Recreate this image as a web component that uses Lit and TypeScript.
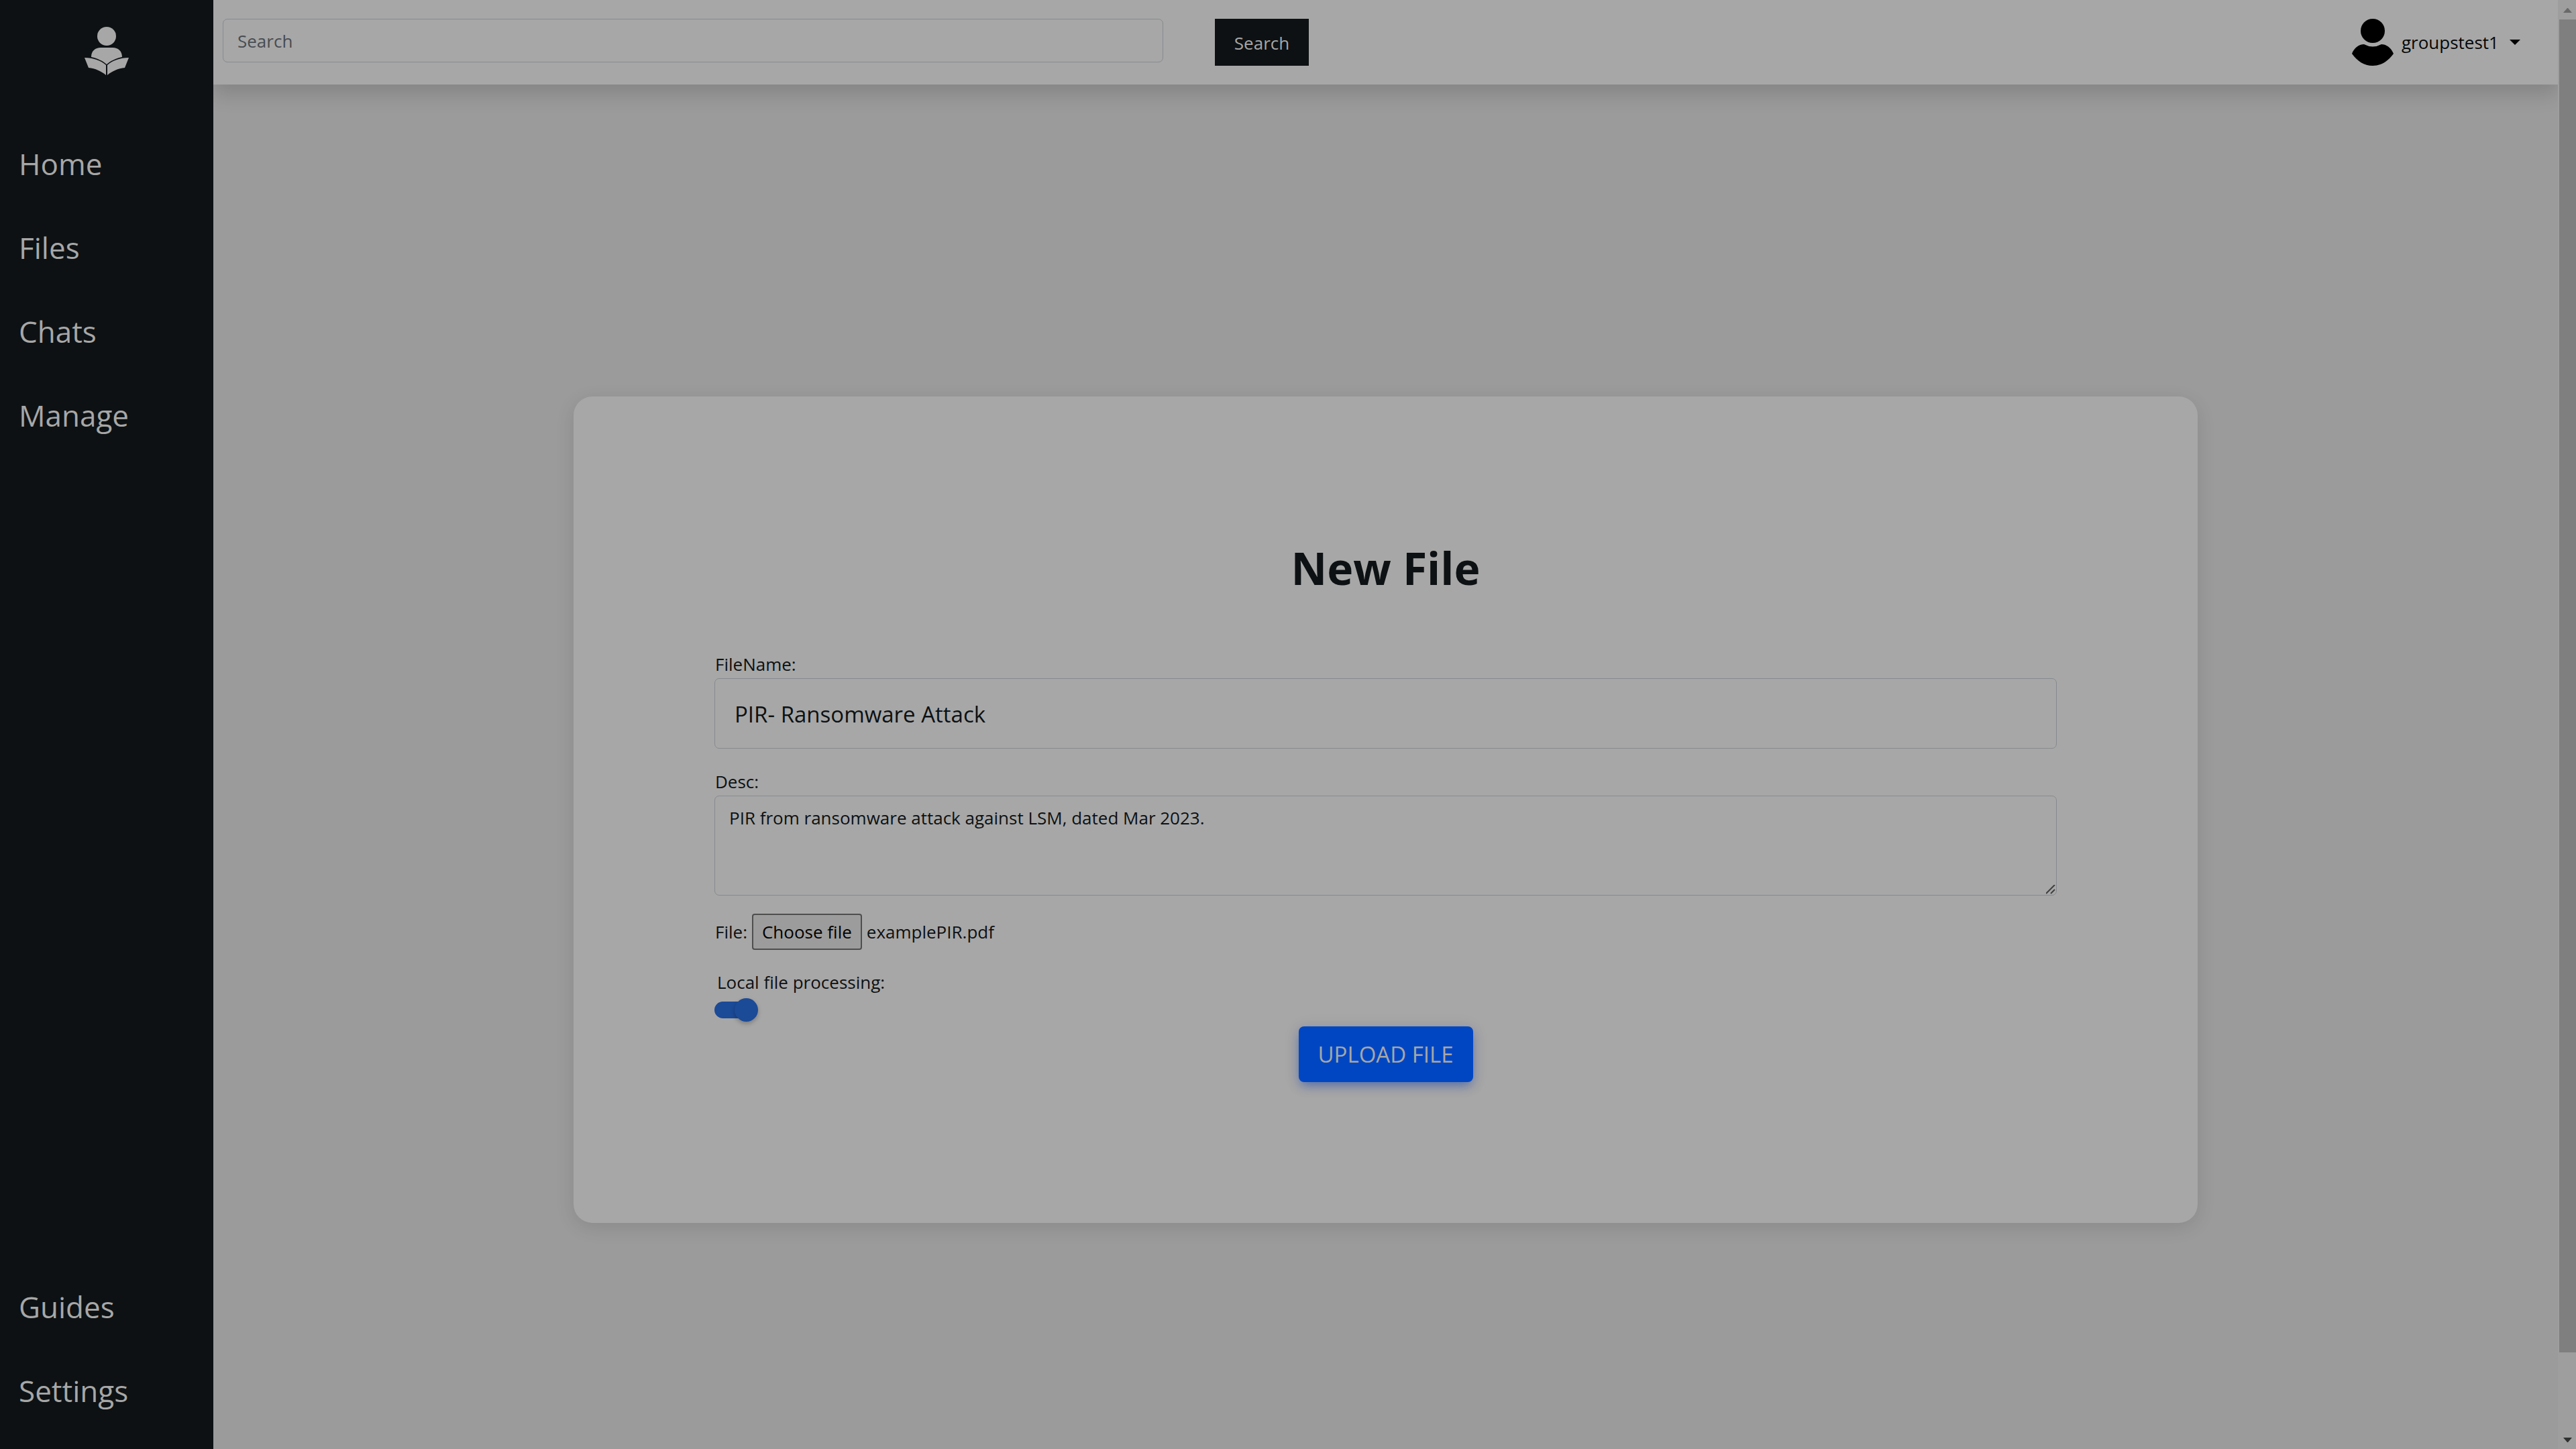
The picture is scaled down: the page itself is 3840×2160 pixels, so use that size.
import { LitElement, html, css, svg } from "lit";
import { customElement, state } from "lit/decorators.js";

const mainLinks = ["Home", "Files", "Chats", "Manage"];
const footLinks = ["Guides", "Settings"];

const readerLogo = svg`
  <circle cx="33" cy="14" r="14" />
  <path d="M10 45 C10 36 16 31 24 31 H42 C50 31 56 36 56 45 C47 47 38 51 33 56 C28 51 19 47 10 45 Z" />
  <path d="M0 46 C13 46 24 50 32 57 V72 C25 66 16 62 6 61 Z" />
  <path d="M66 46 C53 46 42 50 34 57 V72 C41 66 50 62 60 61 Z" />
`;

@customElement("app-root")
export class AppRoot extends LitElement {
  @state() private fileName = "examplePIR.pdf";

  static styles = css`
    :host {
      display: grid;
      grid-template-columns: 318px minmax(0, 1fr) 27px;
      min-height: 100vh;
      background: #9b9b9b;
      color: #0d1113;
      font-family: "Open Sans", "Noto Sans", sans-serif;
      font-size: 26px;
      line-height: 42px;
    }
    * {
      box-sizing: border-box;
    }
    input,
    textarea,
    button {
      font: inherit;
      color: inherit;
      margin: 0;
    }
    a {
      color: inherit;
      text-decoration: none;
    }
    .sidebar {
      z-index: 1;
      display: flex;
      flex-direction: column;
      background: #0d1113;
      color: #a7a7a7;
      padding: 40px 28px 24px;
    }
    .brand {
      align-self: center;
      height: 72px;
      margin-bottom: 70px;
    }
    .logo {
      display: block;
      width: 66px;
      height: 72px;
      fill: #a7a7a7;
    }
    .links {
      display: flex;
      flex-direction: column;
      font-size: 44px;
      line-height: 125px;
    }
    .links.foot {
      margin-top: auto;
    }
    .page {
      display: flex;
      flex-direction: column;
    }
    .topbar {
      display: flex;
      align-items: flex-start;
      height: 126px;
      padding: 28px 56px 28px 14px;
      background: #a7a7a7;
      box-shadow: 0 14px 28px rgba(0, 0, 0, 0.15);
    }
    .search {
      display: flex;
      align-items: flex-start;
      gap: 77px;
      flex: 0 1 1619px;
    }
    .field {
      display: block;
      width: 100%;
      border: 1px solid #868a8e;
      border-radius: 7px;
      background: #a7a7a7;
      outline: none;
    }
    .query {
      flex: 1;
      height: 65px;
      padding: 1px 21px 0;
    }
    .query::placeholder {
      color: #474d53;
      opacity: 1;
    }
    .go {
      width: 140px;
      height: 70px;
      padding: 2px 0 0;
      border: 0;
      background: #0d1113;
      color: #a7a7a7;
    }
    .account {
      display: flex;
      align-items: center;
      height: 70px;
      margin-left: auto;
      padding: 0;
      border: 0;
      background: none;
      color: #050708;
    }
    .avatar {
      width: 62px;
      height: 70px;
      margin-right: 12px;
    }
    .caret {
      width: 16px;
      height: 8px;
      margin-left: 16px;
    }
    .content {
      flex: 1;
      display: flex;
      justify-content: center;
      align-items: flex-start;
      padding-top: 465px;
    }
    .card {
      width: 2421px;
      max-width: 92%;
      padding: 210px;
      border-radius: 28px;
      background: #a7a7a7;
      box-shadow: 0 7px 28px rgba(0, 0, 0, 0.11);
    }
    h1 {
      margin: 0 0 78px;
      font-size: 66px;
      line-height: 90px;
      font-weight: 700;
      text-align: center;
    }
    .label {
      display: block;
      padding-left: 1px;
    }
    .title-input {
      height: 105px;
      padding: 2px 29px 0;
      margin-bottom: 28px;
      font-size: 33px;
    }
    .desc {
      height: 149px;
      padding: 11px 21px;
      margin-bottom: 28px;
      resize: vertical;
    }
    .desc::-webkit-resizer {
      background: url("data:image/svg+xml,%3Csvg xmlns='http://www.w3.org/2000/svg' width='15' height='15'%3E%3Cpath d='M0 13L13 0M7 13L13 7' stroke='%23404040' stroke-width='2'/%3E%3C/svg%3E")
        right bottom no-repeat;
    }
    .file-row {
      display: flex;
      align-items: center;
      gap: 7px;
      height: 52px;
      padding-left: 1px;
      margin-bottom: 28px;
    }
    .picker {
      padding: 4px 13px;
      border: 2px solid #4e4e4e;
      border-radius: 4px;
      background: #9c9c9c;
      color: #000;
    }
    .native {
      position: absolute;
      width: 1px;
      height: 1px;
      opacity: 0;
    }
    .switch-label {
      display: block;
      padding-left: 4px;
    }
    .switch {
      appearance: none;
      display: grid;
      align-items: center;
      width: 65px;
      height: 35px;
      margin-top: 3px;
    }
    .switch::before,
    .switch::after {
      content: "";
      grid-area: 1 / 1;
      background: #1b4a97;
    }
    .switch::before {
      width: 56px;
      height: 25px;
      border-radius: 13px;
    }
    .switch::after {
      justify-self: end;
      width: 35px;
      height: 35px;
      border-radius: 50%;
      box-shadow: 0 3px 6px rgba(0, 0, 0, 0.25);
    }
    .switch:not(:checked)::after {
      justify-self: start;
    }
    .upload {
      display: block;
      height: 83px;
      margin: 7px auto 0;
      padding: 0 29px;
      border: 0;
      border-radius: 8px;
      background: #0046c2;
      color: #a7a7a7;
      font-size: 33px;
      text-transform: uppercase;
      box-shadow: 0 7px 16px -3px rgba(0, 56, 180, 0.5), 0 3px 24px rgba(0, 40, 120, 0.1);
    }
    .scroll {
      z-index: 1;
      display: flex;
      flex-direction: column;
      align-items: center;
      padding-left: 2px;
      background: #9e9e9e;
    }
    .arrow {
      display: block;
      width: 13px;
      height: 7px;
    }
    .arrow.up {
      margin: 12px 0 10px;
      fill: #696969;
    }
    .arrow.down {
      margin: auto 0 10px;
      fill: #2f3130;
    }
    .thumb {
      width: 100%;
      height: 92%;
      background: #7f7f7f;
    }
  `;

  private pickFile(event: Event) {
    const chosen = (event.target as HTMLInputElement).files?.[0];
    if (chosen) this.fileName = chosen.name;
  }

  private link(name: string) {
    return html`<a href="#${name.toLowerCase()}">${name}</a>`;
  }

  render() {
    return html`
      <nav class="sidebar">
        <a class="brand" href="#home" aria-label="Home page">
          <svg class="logo" viewBox="0 0 66 72">${readerLogo}</svg>
        </a>
        <div class="links">${mainLinks.map((name) => this.link(name))}</div>
        <div class="links foot">${footLinks.map((name) => this.link(name))}</div>
      </nav>
      <div class="page">
        <header class="topbar">
          <form class="search" @submit=${(e: Event) => e.preventDefault()}>
            <input class="field query" type="search" placeholder="Search" aria-label="Search" />
            <button class="go">Search</button>
          </form>
          <button class="account">
            <svg class="avatar" viewBox="0 0 62 70">
              <circle cx="31" cy="18" r="18" />
              <path d="M18 38 Q31 45 44 38 C52 38 59 44 62 52 C54 63 44 70 31 70 C18 70 8 63 0 52 C3 44 10 38 18 38 Z" />
            </svg>
            groupstest1
            <svg class="caret" viewBox="0 0 16 8"><path d="M0 0 H16 L8 8 Z" /></svg>
          </button>
        </header>
        <main class="content">
          <form class="card" @submit=${(e: Event) => e.preventDefault()}>
            <h1>New File</h1>
            <label class="label" for="name">FileName:</label>
            <input class="field title-input" id="name" type="text" .value=${"PIR- Ransomware Attack"} />
            <label class="label" for="desc">Desc:</label>
            <textarea class="field desc" id="desc" .value=${"PIR from ransomware attack against LSM, dated Mar 2023."}></textarea>
            <div class="file-row">
              <span>File:</span>
              <label class="picker" for="file">Choose file</label>
              <input class="native" id="file" type="file" @change=${this.pickFile} />
              <output for="file">${this.fileName}</output>
            </div>
            <label class="switch-label" for="local">Local file processing:</label>
            <input class="switch" id="local" type="checkbox" role="switch" checked />
            <button class="upload">Upload file</button>
          </form>
        </main>
      </div>
      <div class="scroll" aria-hidden="true">
        <svg class="arrow up" viewBox="0 0 13 7"><path d="M0 7 L6 0 H7 L13 7 Z" /></svg>
        <div class="thumb"></div>
        <svg class="arrow down" viewBox="0 0 13 7"><path d="M0 0 H13 L7 7 H6 Z" /></svg>
      </div>
    `;
  }
}
